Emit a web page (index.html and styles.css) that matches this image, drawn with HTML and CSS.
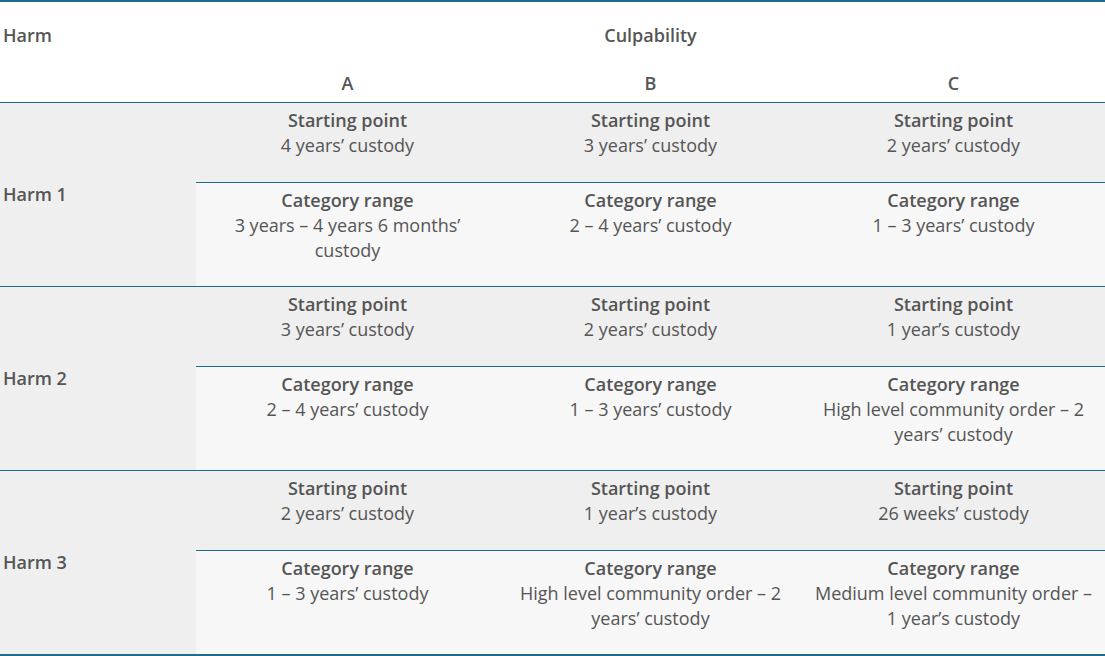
FILE: index.html
```html
<!DOCTYPE html>
<html lang="en">
<head>
<meta charset="utf-8">
<title>Harm and Culpability</title>
<link rel="stylesheet" href="styles.css">
</head>
<body>
<table class="sentencing">
  <colgroup>
    <col class="col-harm">
    <col class="col-cul">
    <col class="col-cul">
    <col class="col-cul">
  </colgroup>
  <thead>
    <tr class="head-top">
      <th class="harm-head">Harm</th>
      <th colspan="3">Culpability</th>
    </tr>
    <tr class="head-sub">
      <th></th>
      <th>A</th>
      <th>B</th>
      <th>C</th>
    </tr>
  </thead>
  <tbody>
    <tr class="sp">
      <th rowspan="2" class="harm">Harm 1</th>
      <td><strong>Starting point</strong><br>4 years’ custody</td>
      <td><strong>Starting point</strong><br>3 years’ custody</td>
      <td><strong>Starting point</strong><br>2 years’ custody</td>
    </tr>
    <tr class="cr">
      <td><strong>Category range</strong><br>3 years – 4 years 6 months’ custody</td>
      <td><strong>Category range</strong><br>2 – 4 years’ custody</td>
      <td><strong>Category range</strong><br>1 – 3 years’ custody</td>
    </tr>
    <tr class="sp">
      <th rowspan="2" class="harm">Harm 2</th>
      <td><strong>Starting point</strong><br>3 years’ custody</td>
      <td><strong>Starting point</strong><br>2 years’ custody</td>
      <td><strong>Starting point</strong><br>1 year’s custody</td>
    </tr>
    <tr class="cr">
      <td><strong>Category range</strong><br>2 – 4 years’ custody</td>
      <td><strong>Category range</strong><br>1 – 3 years’ custody</td>
      <td><strong>Category range</strong><br>High level community order – 2 years’ custody</td>
    </tr>
    <tr class="sp">
      <th rowspan="2" class="harm">Harm 3</th>
      <td><strong>Starting point</strong><br>2 years’ custody</td>
      <td><strong>Starting point</strong><br>1 year’s custody</td>
      <td><strong>Starting point</strong><br>26 weeks’ custody</td>
    </tr>
    <tr class="cr last">
      <td><strong>Category range</strong><br>1 – 3 years’ custody</td>
      <td><strong>Category range</strong><br>High level community order – 2 years’ custody</td>
      <td><strong>Category range</strong><br>Medium level community order – 1 year’s custody</td>
    </tr>
  </tbody>
</table>
</body>
</html>
```

FILE: styles.css
```css
html, body {
  margin: 0;
  padding: 0;
  background: #ffffff;
}

.sentencing {
  width: 1105px;
  border-collapse: collapse;
  table-layout: fixed;
  font-family: "Open Sans", "Liberation Sans", sans-serif;
  font-size: 18px;
  line-height: 25px;
  color: #555555;
  border-top: 2px solid #1d6c8a;
  border-bottom: 3px solid #1d6c8a;
}

.col-harm { width: 196px; }
.col-cul { width: 303px; }

.sentencing th,
.sentencing strong {
  font-weight: 600;
}

thead th {
  text-align: center;
}

.head-top th {
  padding: 21px 0 9px;
  vertical-align: top;
}

.head-top .harm-head {
  text-align: left;
  padding-left: 3px;
}

.head-sub th {
  padding: 14px 0 6px;
  vertical-align: top;
  border-bottom: 1px solid #1d6c8a;
}

tbody td {
  text-align: center;
  vertical-align: top;
  padding: 5px 8px 24px;
}

.cr td {
  padding-bottom: 23px;
}

tbody .harm {
  text-align: left;
  vertical-align: middle;
  padding: 0 0 0 3px;
  background: #efefef;
  border-bottom: 1px solid #1d6c8a;
}

.sp td {
  background: #efefef;
  border-bottom: 1px solid #1d6c8a;
}

.cr td {
  background: #f7f7f7;
  border-bottom: 1px solid #1d6c8a;
}

.cr.last td,
tbody tr:last-child .harm {
  border-bottom: 0;
}
```
